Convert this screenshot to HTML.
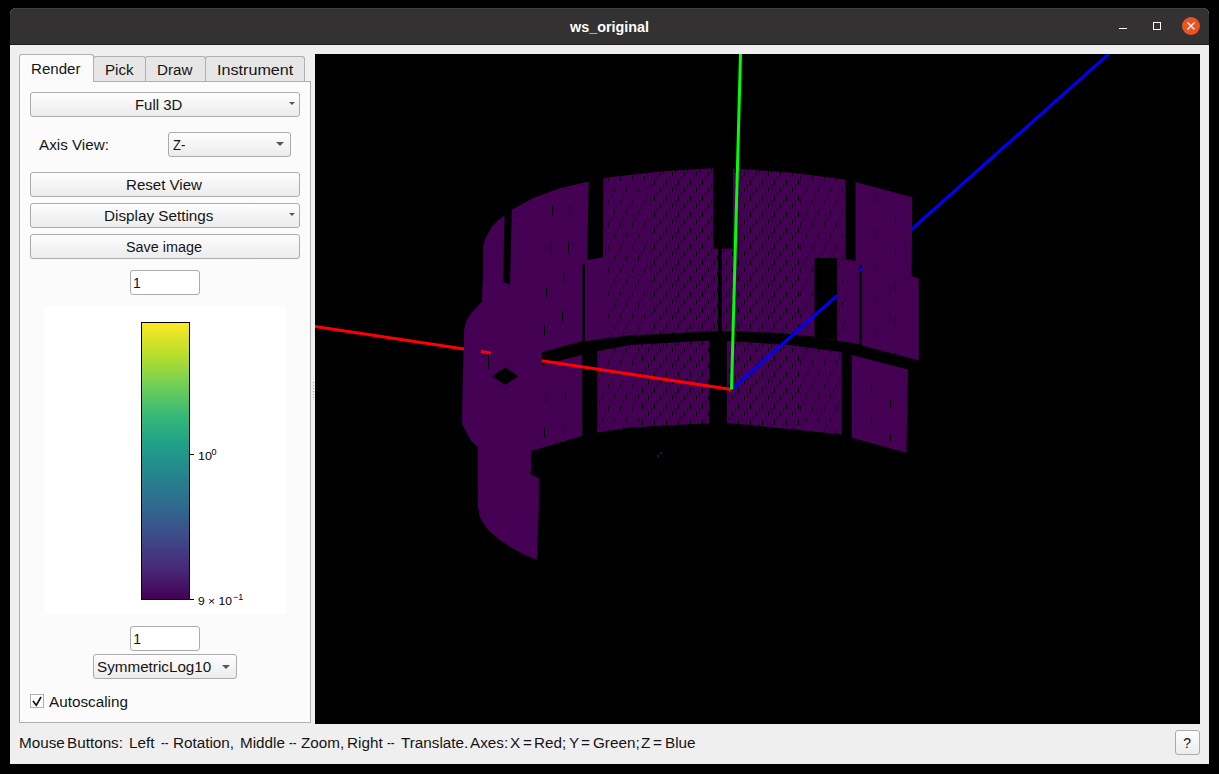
<!DOCTYPE html>
<html><head><meta charset="utf-8">
<style>
*{box-sizing:border-box;margin:0;padding:0}
html,body{width:1219px;height:774px;background:#000;overflow:hidden;font-family:"Liberation Sans",sans-serif;font-size:14px;color:#141414}
div{position:absolute}
.t{font-size:14px;line-height:14px;white-space:pre;transform-origin:0 0}
#win{left:10px;top:8px;width:1199px;height:756px;background:#efefef;border-radius:6px 6px 0 0;overflow:hidden}
#title{left:0;top:0;width:1199px;height:37px;background:#333131;border-top:1px solid #403e3e;border-bottom:1px solid #1d1d1d}
.btn{border:1px solid #ababab;border-radius:3px;background:linear-gradient(#fdfdfd,#ececec)}
.arrow{width:0;height:0;border-left:4px solid transparent;border-right:4px solid transparent;border-top:4px solid #585858}
.inp{border:1px solid #ababab;border-radius:3px;background:#fff}
.tab{border:1px solid #b0b0b0;border-bottom:none;border-radius:3px 3px 0 0;background:#e6e6e6}
</style></head>
<body>
<div id="win">
  <div id="title"></div>
</div>
<div class="t" style="left:570px;top:19.5px;font-size:14.5px;line-height:14.5px;font-weight:bold;color:#fff;transform:scaleX(0.99)">ws_original</div>
<!-- window controls -->
<div style="left:1119px;top:28px;width:8px;height:1px;background:#fff"></div>
<div style="left:1153px;top:22px;width:8px;height:8px;border:1px solid #fff"></div>
<div style="left:1182px;top:17px;width:18px;height:18px;border-radius:50%;background:#e95420"></div>
<svg style="position:absolute;left:1182px;top:17px" width="18" height="18"><path d="M5.5 5.5 L12.5 12.5 M12.5 5.5 L5.5 12.5" stroke="#fff" stroke-width="1.3"/></svg>

<!-- tab bar -->
<div class="tab" style="left:93px;top:56px;width:53px;height:26px"></div>
<div class="tab" style="left:145px;top:56px;width:61px;height:26px"></div>
<div class="tab" style="left:205px;top:56px;width:100px;height:26px"></div>
<div style="left:19px;top:81px;width:292px;height:642px;background:#fbfbfb;border:1px solid #b0b0b0"></div>
<div class="tab" style="left:19px;top:54px;width:75px;height:28px;background:#fbfbfb;z-index:2"></div>
<div class="t" style="left:31px;top:62px;transform:scaleX(1.076);z-index:3">Render</div>
<div class="t" style="left:104.6px;top:63px;transform:scaleX(1.084)">Pick</div>
<div class="t" style="left:156.7px;top:63px;transform:scaleX(1.084)">Draw</div>
<div class="t" style="left:216.5px;top:63px;transform:scaleX(1.154)">Instrument</div>

<div class="btn" style="left:30px;top:92px;width:270px;height:25px"></div>
<div class="arrow" style="left:289px;top:102px;border-left-width:3px;border-right-width:3px;border-top-width:3px"></div>
<div class="t" style="left:135.1px;top:98px;transform:scaleX(1.067)">Full 3D</div>

<div class="t" style="left:39px;top:138px;transform:scaleX(1.087)">Axis View:</div>
<div class="btn" style="left:168px;top:132px;width:123px;height:25px"></div>
<div class="arrow" style="left:276px;top:142px"></div>
<div class="t" style="left:173px;top:138px;transform:scaleX(0.93)">Z-</div>

<div class="btn" style="left:30px;top:172px;width:270px;height:25px"></div>
<div class="t" style="left:126.3px;top:178px;transform:scaleX(1.077)">Reset View</div>
<div class="btn" style="left:30px;top:203px;width:270px;height:25px"></div>
<div class="arrow" style="left:289px;top:213px;border-left-width:3px;border-right-width:3px;border-top-width:3px"></div>
<div class="t" style="left:104.1px;top:209px;transform:scaleX(1.09)">Display Settings</div>
<div class="btn" style="left:30px;top:234px;width:270px;height:25px"></div>
<div class="t" style="left:126px;top:240px;transform:scaleX(1.027)">Save image</div>

<div class="inp" style="left:130px;top:270px;width:70px;height:25px"></div>
<div class="t" style="left:133px;top:276px">1</div>

<!-- colorbar plot -->
<div style="left:44px;top:307px;width:242px;height:307px;background:#fff"></div>
<div style="left:141px;top:322px;width:49px;height:278px;border:1px solid #000;background:linear-gradient(to top,#440154 0%,#482878 11%,#3e4989 22%,#31688e 33%,#26828e 44%,#1f9e89 55%,#35b779 66%,#6ece58 77%,#b5de2b 88%,#fde725 100%)"></div>
<div style="left:190px;top:454px;width:4px;height:1px;background:#000"></div>
<div style="left:190px;top:599px;width:4px;height:1px;background:#000"></div>
<div class="t" style="left:197.7px;top:451px;font-size:11px;line-height:11px;color:#000;transform:scaleX(1.15)">10</div>
<div class="t" style="left:211.5px;top:447.5px;font-size:9px;line-height:9px;color:#000">0</div>
<div class="t" style="left:198.4px;top:596px;font-size:11px;line-height:11px;color:#000;transform:scaleX(1.1)">9 × 10</div>
<div class="t" style="left:233px;top:592.5px;font-size:9px;line-height:9px;color:#000">−1</div>

<div class="inp" style="left:130px;top:626px;width:70px;height:25px"></div>
<div class="t" style="left:133.3px;top:632px">1</div>
<div class="btn" style="left:93px;top:654px;width:144px;height:25px"></div>
<div class="arrow" style="left:222px;top:664.5px"></div>
<div class="t" style="left:97px;top:660px;transform:scaleX(1.088)">SymmetricLog10</div>

<div style="left:30px;top:694px;width:14px;height:14px;border:1px solid #b0b0b0;background:#fff"></div>
<svg style="position:absolute;left:30px;top:694px" width="14" height="14"><path d="M3 7 L6.3 11.3 L11 3" stroke="#111" stroke-width="1.7" fill="none"/></svg>
<div class="t" style="left:49.2px;top:695px;transform:scaleX(1.09)">Autoscaling</div>

<div style="left:313px;top:382px;width:1px;height:1px;background:#a8a8a8"></div><div style="left:313px;top:385px;width:1px;height:1px;background:#a8a8a8"></div><div style="left:313px;top:388px;width:1px;height:1px;background:#a8a8a8"></div><div style="left:313px;top:391px;width:1px;height:1px;background:#a8a8a8"></div><div style="left:313px;top:394px;width:1px;height:1px;background:#a8a8a8"></div><div style="left:313px;top:397px;width:1px;height:1px;background:#a8a8a8"></div>
<!-- viewport -->
<div id="vp" style="left:315px;top:54px;width:885px;height:670px;background:#000;overflow:hidden">
<svg width="885" height="670" style="position:absolute;left:0;top:0">
<defs><pattern id="dash" patternUnits="userSpaceOnUse" x="0" y="0" width="12" height="16"><rect x="0" y="12" width="1" height="5" fill="#000"/><rect x="3" y="8" width="1" height="5" fill="#000"/><rect x="6" y="4" width="1" height="5" fill="#000"/><rect x="9" y="0" width="1" height="5" fill="#000"/><rect x="9" y="16" width="1" height="1" fill="#000"/></pattern>
<pattern id="dash2" patternUnits="userSpaceOnUse" x="5" y="3" width="12" height="23"><rect x="0" y="18" width="1" height="5" fill="#000"/><rect x="3" y="12" width="1" height="5" fill="#000"/><rect x="6" y="6" width="1" height="5" fill="#000"/><rect x="9" y="0" width="1" height="5" fill="#000"/></pattern></defs>
<g transform="translate(-315,-54)">
<line x1="731.5" y1="389.5" x2="1108.6" y2="54" stroke="#0000ff" stroke-width="3"/>
<path fill="#440154" d="M483.1,245.6 L485.9,237.2 L491.8,227.1 L498,220.5 L504.9,215 L512,209.5 L533.8,197.7 L559,188.5 L588.9,181.4 L603.5,178.1 L660,171.5 L714.7,168 L733,168.4 L790,172.5 L845.5,179.5 L855.5,182 L912.2,197.2 L911.7,276.5 L918.7,278.3 L918.7,360.3 L908,369.4 L906.4,452.8 L850,437.2 L840,434.3 L726,422.7 L709,423.3 L630,427.5 L597.3,432.6 L581.8,435.9 L531,451 L531,470.3 L530,473 L531,474.5 L538.9,477.9 L538.9,503.7 L537.5,542 L536.8,559.7 L524.2,554.6 L510.7,547.3 L499.1,539.6 L488.4,529.9 L481.6,520.2 L479.2,515.3 L479.2,509 L477.9,509 L477.9,447.1 L471,440.8 L466.8,432.8 L463,426.1 L462.1,421.9 L462.5,390 L464.1,330.4 L464.9,326.2 L466.8,320.3 L471,313.6 L482.1,301.4 L482.5,282 L483.1,280 Z"/>
<rect x="650" y="160" width="150" height="190" fill="url(#dash)"/>
<rect x="603" y="160" width="47" height="190" fill="url(#dash2)" opacity="0.7"/>
<rect x="800" y="160" width="46" height="190" fill="url(#dash2)" opacity="0.6"/>
<rect x="640" y="340" width="160" height="100" fill="url(#dash)"/>
<rect x="598" y="340" width="42" height="100" fill="url(#dash2)" opacity="0.7"/>
<rect x="800" y="340" width="41" height="100" fill="url(#dash2)" opacity="0.6"/>
<g fill="#000"><rect x="875" y="195" width="1" height="8"/><rect x="875" y="229" width="1" height="8"/><rect x="875" y="263" width="1" height="8"/><rect x="875" y="297" width="1" height="8"/><rect x="875" y="331" width="1" height="8"/><rect x="895" y="215" width="1" height="8"/><rect x="895" y="249" width="1" height="8"/><rect x="895" y="283" width="1" height="8"/><rect x="895" y="317" width="1" height="8"/><rect x="895" y="351" width="1" height="8"/><rect x="871" y="383" width="1" height="8"/><rect x="871" y="417" width="1" height="8"/><rect x="890" y="400" width="1" height="8"/><rect x="890" y="434" width="1" height="8"/><rect x="552" y="205" width="1" height="10"/><rect x="551" y="243" width="1" height="10"/><rect x="546" y="287" width="1" height="10"/><rect x="544" y="325" width="1" height="10"/><rect x="545" y="393" width="1" height="10"/><rect x="544" y="428" width="1" height="10"/><rect x="569" y="205" width="1" height="10"/><rect x="568" y="241" width="1" height="12"/><rect x="563" y="271" width="1" height="12"/><rect x="562" y="310" width="1" height="12"/><rect x="565" y="392" width="1" height="12"/><rect x="563" y="427" width="1" height="12"/><rect x="488" y="354" width="1" height="16"/></g>
<path fill="#000" d="M542,352.2 L580,341.7 L597,339.5 L630,335.2 L650,334.5 L720,330.7 L780,333 L813,336.5 L837,340.4 L858.8,344 L860,345 L918.7,360.3 L930,363 L930,375 L908,369.4 L851.8,354.9 L841.7,352 L790,345 L727.8,340.9 L709.2,340.6 L630,345 L597.6,351 L542,365 Z"/>
<path fill="#000" d="M504.9,200 L512,200 L510,285 L503,281.7 Z M588.9,170 L603.5,170 L603,257.3 L587.2,259.9 Z M713.1,160 L733,160 L733,248.5 L713.1,248.5 Z M845.5,170 L855.5,170 L855.5,261 L845.5,259.2 Z"/>
<path fill="#000" d="M582.5,264 h2.5 v78 h-2.5 Z M718,248 h3.7 v84 h-3.7 Z M859.2,265 h2.8 v82 h-2.8 Z M814.5,258.1 L837.1,258.1 L837.1,340 L814.5,337 Z"/>
<path fill="#000" d="M582.2,345 L597.3,345 L597.3,440 L582.2,440 Z M709.2,338 L726.8,338 L726.8,426 L709.2,426 Z M841.7,350 L851.8,350 L851.8,440 L841.7,440 Z M492.2,376.2 L505.2,367.5 L518.2,376.2 L505.2,384.9 Z"/>
<line x1="731.5" y1="389.5" x2="837" y2="295.6" stroke="#0000ff" stroke-width="3"/>
<line x1="859.5" y1="270.8" x2="862" y2="268.5" stroke="#0000ff" stroke-width="3"/>
<line x1="315" y1="326.4" x2="464" y2="349" stroke="#ff0000" stroke-width="3"/>
<line x1="481" y1="351.6" x2="490.7" y2="353.1" stroke="#ff0000" stroke-width="3"/>
<line x1="542" y1="360.8" x2="731.5" y2="389.5" stroke="#ff0000" stroke-width="3"/>
<line x1="740.5" y1="54" x2="731.5" y2="389.5" stroke="#00ff00" stroke-width="3"/>
<rect x="657" y="455" width="2" height="2" fill="#440154"/><rect x="660" y="452" width="2" height="2" fill="#440154"/>
</g></svg>
</div>

<div class="t" style="left:18.5px;top:736px;transform:scaleX(1.09)">Mouse</div><div class="t" style="left:67.3px;top:736px;transform:scaleX(1.09)">Buttons:</div><div class="t" style="left:129.0px;top:736px;transform:scaleX(1.09)">Left</div><div class="t" style="left:160.6px;top:736px;transform:scaleX(0.8)">--</div><div class="t" style="left:172.7px;top:736px;transform:scaleX(1.09)">Rotation,</div><div class="t" style="left:239.6px;top:736px;transform:scaleX(1.09)">Middle</div><div class="t" style="left:289.2px;top:736px;transform:scaleX(0.8)">--</div><div class="t" style="left:301.3px;top:736px;transform:scaleX(1.09)">Zoom,</div><div class="t" style="left:347.2px;top:736px;transform:scaleX(1.09)">Right</div><div class="t" style="left:386.5px;top:736px;transform:scaleX(0.8)">--</div><div class="t" style="left:400.9px;top:736px;transform:scaleX(1.09)">Translate.</div><div class="t" style="left:469.8px;top:736px;transform:scaleX(1.09)">Axes:</div><div class="t" style="left:510.0px;top:736px;transform:scaleX(1.09)">X</div><div class="t" style="left:522.9px;top:736px;transform:scaleX(1.09)">=</div><div class="t" style="left:534.4px;top:736px;transform:scaleX(1.09)">Red;</div><div class="t" style="left:568.8px;top:736px;transform:scaleX(1.09)">Y</div><div class="t" style="left:581.2px;top:736px;transform:scaleX(1.09)">=</div><div class="t" style="left:593.2px;top:736px;transform:scaleX(1.09)">Green;</div><div class="t" style="left:640.6px;top:736px;transform:scaleX(1.09)">Z</div><div class="t" style="left:653.0px;top:736px;transform:scaleX(1.09)">=</div><div class="t" style="left:665.0px;top:736px;transform:scaleX(1.09)">Blue</div>
<div class="btn" style="left:1175px;top:730px;width:25px;height:25px"></div>
<div class="t" style="left:1183.2px;top:736px">?</div>
</body></html>
